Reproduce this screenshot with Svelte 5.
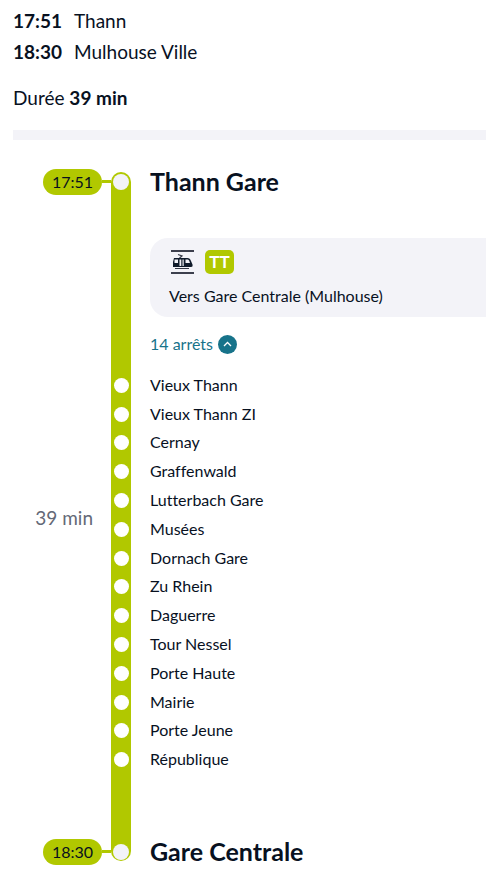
<script>
  const summary = [
    { time: '17:51', place: 'Thann' },
    { time: '18:30', place: 'Mulhouse Ville' }
  ];
  const stops = [
    'Vieux Thann', 'Vieux Thann ZI', 'Cernay', 'Graffenwald', 'Lutterbach Gare',
    'Musées', 'Dornach Gare', 'Zu Rhein', 'Daguerre', 'Tour Nessel',
    'Porte Haute', 'Mairie', 'Porte Jeune', 'République'
  ];
  let open = $state(true);
</script>

<main>
  <header>
    {#each summary as point}
      <p class="point"><strong>{point.time}</strong><span>{point.place}</span></p>
    {/each}
    <p class="total">Durée <strong>39 min</strong></p>
  </header>

  <section class="leg">
    <div class="rail"></div>
    <p class="duration">39 min</p>

    <div class="station first">
      <div class="when"><time>17:51</time><i></i></div>
      <span class="node"></span>
      <h2>Thann Gare</h2>
    </div>

    <div class="details">
      <div class="card">
        <div class="line">
          <svg width="24" height="24" viewBox="0 0 24 24" role="img" aria-label="Tram-train">
            <path d="M0 1h23M0 23h23" stroke="#3c3f4d" stroke-width="2" />
            <path d="M7 4.500l4 1.500-2.500 2" fill="none" stroke="#343846" stroke-width="1.200" />
            <path fill="#101b2b" d="M3 8h13.500q2.500 0 3.500 3l1.500 3.500q.5 2.500-1.500 2.500H2v-5z" />
            <path fill="#f3f3f8" d="M3.500 9.500H7V13H3.500zM8.500 9.500h1.800V16H8.500zM11.500 9.500h1.200V16h-1.200zM14.500 9.500H17q1.200 0 2 3.500h-4.500z" />
            <path d="M4 18.500h14" stroke="#343846" stroke-width="1" />
          </svg>
          <span class="badge">TT</span>
        </div>
        <p>Vers Gare Centrale (Mulhouse)</p>
      </div>
      <button class="toggle" aria-expanded={open} onclick={() => (open = !open)}>
        14 arrêts
        <svg class:closed={!open} width="19" height="19" viewBox="0 0 19 19" aria-hidden="true">
          <circle cx="9.500" cy="9.500" r="9.500" fill="#17738a" />
          <path d="M6 11l3.500-3.500L13 11" fill="none" stroke="#fff" stroke-width="1.300" />
        </svg>
      </button>
    </div>

    {#if open}
      <ol>
        {#each stops as stop}
          <li><span class="dot"></span><span>{stop}</span></li>
        {/each}
      </ol>
    {/if}

    <div class="station last">
      <div class="when"><time>18:30</time><i></i></div>
      <span class="node"></span>
      <h2>Gare Centrale</h2>
    </div>
  </section>
</main>

<style>
  :global(body) {
    margin: 0;
    background: #fff;
  }
  main {
    font-family: Lato, "Liberation Sans", sans-serif;
    font-size: 16px;
    font-variant-ligatures: none;
    color: #08111f;
    overflow: hidden;
  }
  p, h2, ol {
    margin: 0;
    padding: 0;
  }
  header {
    margin-left: 13px;
    padding: 5px 0 17px;
    border-bottom: 10px solid #f3f3f8;
    font-size: 19px;
    line-height: 31px;
  }
  .point {
    display: flex;
  }
  .point strong {
    width: 61px;
  }
  .total {
    margin-top: 15px;
  }
  .leg {
    display: grid;
    grid-template-columns: 111px 20px 1fr;
    margin-top: 28px;
  }
  .rail {
    grid-area: 1 / 2 / 5 / 3;
    margin: 4px 0;
    border-radius: 10px;
    background: #b1c800;
  }
  .duration {
    grid-area: 1 / 1 / 5 / 2;
    align-self: center;
    padding: 3px 18px 0 0;
    text-align: right;
    font-size: 19px;
    line-height: 24px;
    color: #646977;
  }
  .station {
    grid-column: 1 / 4;
    display: grid;
    grid-template-columns: 111px 20px 1fr;
    align-items: center;
    height: 27px;
  }
  .first {
    grid-row: 1;
  }
  .last {
    grid-row: 4;
    margin-top: 65px;
  }
  .when {
    display: flex;
    align-items: center;
    padding-left: 43px;
  }
  time {
    width: 59px;
    border-radius: 13px;
    background: #b1c800;
    font-size: 16px;
    line-height: 26px;
    text-align: center;
  }
  .when i {
    flex: 1;
    height: 3px;
    background: #b1c800;
  }
  .node, .dot {
    justify-self: center;
    width: 15px;
    height: 15px;
    border-radius: 50%;
    background: #fff;
  }
  .node {
    width: 16px;
    height: 16px;
    background: #f3f3f8;
  }
  h2 {
    padding-left: 19px;
    font-size: 25px;
    line-height: 27px;
  }
  .details {
    grid-area: 2 / 3;
    padding: 43px 0 14px 19px;
  }
  .card {
    padding: 12px 19px 9px;
    border-radius: 18px 0 0 18px;
    background: #f3f3f8;
    line-height: 24px;
  }
  .card p {
    margin-top: 10px;
  }
  .line {
    display: flex;
    gap: 10px;
    padding-left: 2px;
  }
  .badge {
    width: 29px;
    border-radius: 5px;
    background: #b1c800;
    color: #fff;
    font-size: 17px;
    font-weight: 700;
    text-align: center;
  }
  .toggle {
    display: flex;
    align-items: center;
    gap: 5px;
    margin-top: 15px;
    padding: 0;
    border: 0;
    background: none;
    font: inherit;
    line-height: 24px;
    color: #17738a;
    cursor: pointer;
  }
  .closed {
    transform: rotate(180deg);
  }
  ol {
    grid-area: 3 / 2 / 4 / 4;
    display: grid;
    grid-auto-rows: 1fr;
    height: 403px;
    list-style: none;
  }
  li {
    display: grid;
    grid-template-columns: 20px 1fr;
    column-gap: 19px;
    align-items: center;
  }
  .dot {
    margin-top: 2px;
  }
</style>
